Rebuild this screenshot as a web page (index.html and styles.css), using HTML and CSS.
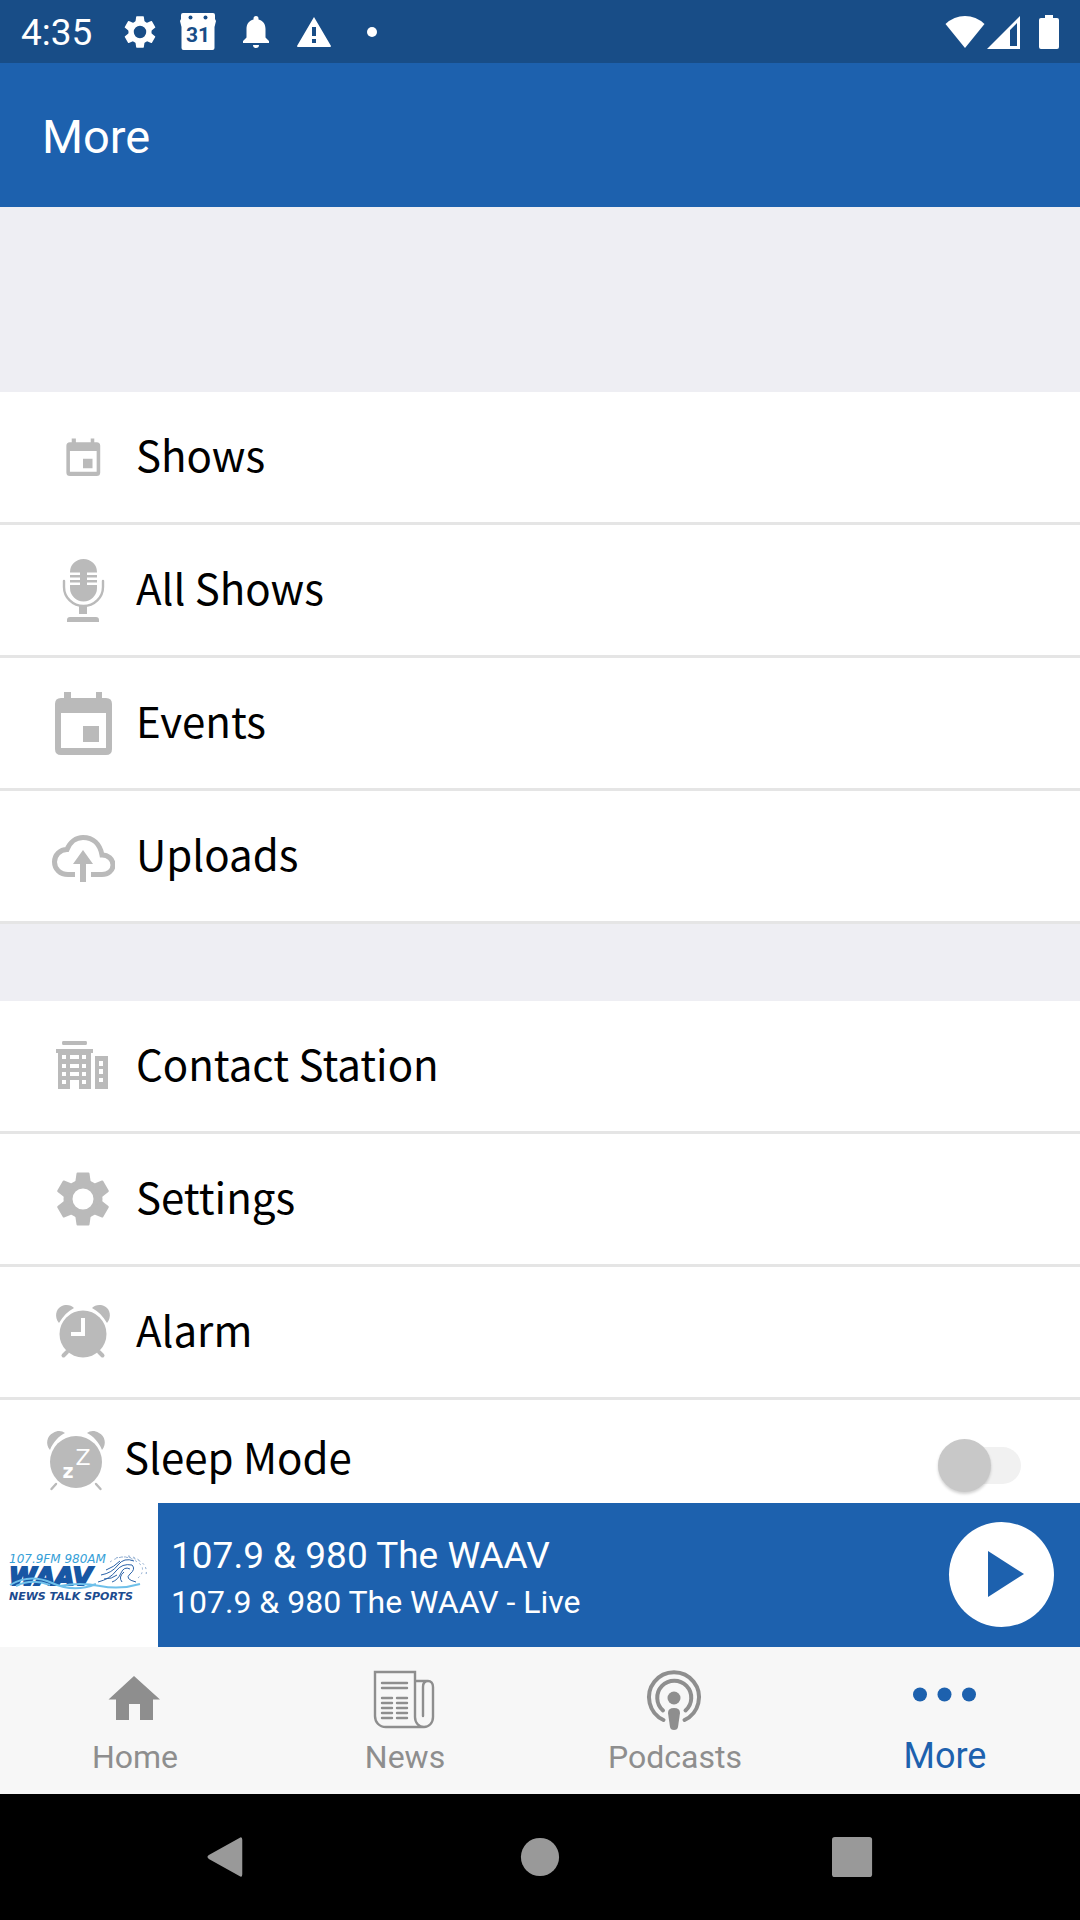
FILE: index.html
```html
<!DOCTYPE html>
<html lang="en">
<head>
<meta charset="utf-8">
<meta name="viewport" content="width=device-width, initial-scale=1">
<title>More</title>
<link rel="stylesheet" href="styles.css">
</head>
<body>
<svg class="sprite" aria-hidden="true">
  <symbol id="calendar" viewBox="0 0 64 64">
    <path fill-rule="evenodd" d="M10 7H13V1H20V7H45V1H51V7H55Q61 7 61 13V58Q61 64 55 64H10Q4 64 4 58V13Q4 7 10 7ZM10 22V57H55V22ZM32 35H48V51H32Z"/>
  </symbol>
  <symbol id="gear" viewBox="0 0 54 54">
    <circle cx="27" cy="27" r="15" fill="none" stroke="currentColor" stroke-width="9"/>
    <g id="teeth">
      <path id="tooth" d="M20.5 1.5Q20.6.5 21.5.5H32.5Q33.4.5 33.5 1.5L35 12H19Z"/>
      <use href="#tooth" transform="rotate(60 27 27)"/>
      <use href="#tooth" transform="rotate(120 27 27)"/>
      <use href="#tooth" transform="rotate(180 27 27)"/>
      <use href="#tooth" transform="rotate(240 27 27)"/>
      <use href="#tooth" transform="rotate(300 27 27)"/>
    </g>
  </symbol>
</svg>

<div class="status-bar">
  <time class="clock">4:35</time>
  <svg class="st-gear" aria-hidden="true"><use href="#gear"/></svg>
  <svg class="st-cal" viewBox="0 0 36 37" aria-hidden="true">
    <path d="M3 0H33Q35 0 35 2V6L36 8L34.500 14V35Q34.500 37 32.500 37H3.500Q1.500 37 1.500 35V14L0 8L1 6V2Q1 0 3 0Z"/>
    <circle class="hole" cx="10.500" cy="4.500" r="2"/><circle class="hole" cx="25.500" cy="4.500" r="2"/>
    <text class="cal-day" x="18" y="29">31</text>
  </svg>
  <svg class="st-bell" viewBox="0 0 32 32" aria-hidden="true">
    <path d="M3 27V25L6.500 21.500V13C6.500 8 9 4.500 13.500 3.500V2.500Q13.500 0 16 0Q18.500 0 18.500 2.500V3.500C23 4.500 25.500 8 25.500 13V21.500L29 25V27ZM13 29H19Q19 32 16 32Q13 32 13 29Z"/>
  </svg>
  <svg class="st-warn" viewBox="0 0 36 32" aria-hidden="true">
    <path fill-rule="evenodd" d="M18 1L35 30Q35 31 34 31H2Q1 31 1 30ZM16 11V20H20V11ZM16 23V27H20V23Z"/>
  </svg>
  <svg class="st-dot" viewBox="0 0 32 32" aria-hidden="true"><circle cx="16" cy="16" r="5"/></svg>
  <div class="signals">
    <svg class="st-wifi" viewBox="0 0 40 34" aria-hidden="true"><path d="M0.500 9Q9 1 20 1Q31 1 39.500 9L20 33Z"/></svg>
    <svg class="st-cell" viewBox="0 0 34 34" aria-hidden="true"><path fill-rule="evenodd" d="M0 34L33 1V34ZM23 15V31H30V8Z"/></svg>
    <svg class="st-batt" viewBox="0 0 20 34" aria-hidden="true"><path d="M6 0H14V3H18Q20 3 20 5V32Q20 34 18 34H2Q0 34 0 32V5Q0 3 2 3H6Z"/></svg>
  </div>
</div>

<header class="app-bar"><h1 class="app-title">More</h1></header>

<main class="content">
  <nav class="group" aria-label="Programming">
    <a class="row" href="#shows">
      <span class="row-icon"><svg class="icon-small"><use href="#calendar"/></svg></span>
      <span class="row-text">Shows</span></a>
    <a class="row" href="#all-shows">
      <span class="row-icon"><svg class="icon" viewBox="0 0 64 64">
        <path d="M19 14.500V14A13.500 13 0 0 1 46 14V14.500H36V17H46V19.500H36V22H46V24.500H36V27H46V30A13.500 13.500 0 0 1 19 30V27H29V24.500H19V22H29V19.500H19V17H29V14.500ZM28 47H36V56H28ZM16 64V62Q16 59 19 59H45Q48 59 48 62V64Z"/>
        <path class="line-2" d="M13 23V29A19.500 19 0 0 0 52 29V23"/>
      </svg></span>
      <span class="row-text">All Shows</span></a>
    <a class="row" href="#events">
      <span class="row-icon"><svg class="icon"><use href="#calendar"/></svg></span>
      <span class="row-text">Events</span></a>
    <a class="row" href="#uploads">
      <span class="row-icon"><svg class="icon" viewBox="0 0 64 64">
        <path class="line-5" d="M24 50.500H17C9 50.500 3.500 45 3.500 38C3.500 31 9 25.500 16 25.500C19 18 25 13.500 32 13.500C42 13.500 49 20 51 31C57 31 62 35 62 41C62 46.500 57 50.500 51 50.500H40"/>
        <path d="M32 26L42 40H35V58H29V40H22Z"/>
      </svg></span>
      <span class="row-text">Uploads</span></a>
  </nav>

  <div class="group">
    <a class="row" href="#contact">
      <span class="row-icon"><svg class="icon" viewBox="0 0 64 64">
        <path fill-rule="evenodd" d="M12 7H35Q36 7 36 9Q36 11 35 11H12Q11 11 11 9Q11 7 12 7ZM5 15H42V19H40V55H28V46H19V55H7V19H5ZM11 21V25H15V21ZM19 21V25H28V21ZM31 21V25H35V21ZM11 30V34H15V30ZM19 30V34H28V30ZM31 30V34H35V30ZM11 38V42H15V38ZM19 38V42H28V38ZM31 38V42H35V38ZM11 46V50H15V46ZM31 46V50H35V46ZM44 22H57V55H44ZM48 27V32H52V27ZM48 35V40H52V35ZM48 44V48H52V44Z"/>
      </svg></span>
      <span class="row-text">Contact Station</span></a>
    <a class="row" href="#settings">
      <span class="row-icon"><svg class="icon-gear"><use href="#gear"/></svg></span>
      <span class="row-text">Settings</span></a>
    <a class="row" href="#alarm">
      <span class="row-icon"><svg class="icon" viewBox="0 0 64 64">
        <circle cx="32" cy="34" r="23.500"/>
        <path d="M8 23C3 17 5 9 10 6.500C15 4 20 5 23 8C17 11 12 16 8 23ZM56 23C61 17 59 9 54 6.500C49 4 44 5 41 8C47 11 52 16 56 23Z"/>
        <path class="line-4" d="M16 52L12.500 55.500M48 52L51.500 55.500"/>
        <path class="hand" d="M32 18V34H20"/>
      </svg></span>
      <span class="row-text">Alarm</span></a>
    <div class="row row-switch">
      <span class="row-icon"><svg class="icon" viewBox="0 0 64 64">
        <circle cx="32" cy="34" r="26"/>
        <path d="M6 22C1 16 3 8 9 5C14 2 18 3 21 5C15 8 9 14 6 22ZM58 22C63 16 61 8 55 5C50 2 46 3 43 5C49 8 55 14 58 22Z"/>
        <path class="line-2" d="M12 56L7.500 61M52 56L56.500 61"/>
        <text class="z-large" x="39" y="37">Z</text>
        <text class="z-small" x="24" y="50">z</text>
      </svg></span>
      <label class="row-text" for="sleep">Sleep Mode</label>
      <input class="switch" id="sleep" type="checkbox" role="switch">
    </div>
  </div>
</main>

<section class="player" aria-label="Now playing">
  <svg class="art" viewBox="0 0 158 144" role="img" aria-label="WAAV station logo">
    <text class="art-freq" x="9" y="60">107.9FM 980AM</text>
    <text class="art-name" x="9" y="82">WAAV</text>
    <path class="wave-light" d="M10 82Q30 70 52 80T96 81M16 83Q32 75 50 82M60 83Q80 79 100 83T140 81"/>
    <path class="wave-dark" d="M98 79Q110 76 116 68T132 62Q136 66 130 71Q124 76 136 79M101 72Q112 70 118 62T134 58M106 67Q114 64 120 58M112 79Q118 77 121 70T130 66M104 76Q112 76 117 72M122 79Q118 74 124 69"/>
    <path class="wave-spray" d="M110 59Q122 50 138 57Q148 62 146 72M116 55Q130 51 142 63Q144 70 138 75M128 53Q136 54 141 59"/>
    <text class="art-tag" x="9" y="97">NEWS TALK SPORTS</text>
  </svg>
  <div class="track">
    <div class="track-title">107.9 &amp; 980 The WAAV</div>
    <div class="track-sub">107.9 &amp; 980 The WAAV - Live</div>
  </div>
  <button class="play" type="button" aria-label="Play">
    <svg class="play-icon" viewBox="0 0 36 46" aria-hidden="true"><path d="M0 0L36 23L0 46Z"/></svg>
  </button>
</section>

<nav class="tabs" aria-label="Main">
  <a class="tab" href="#home">
    <svg class="icon" viewBox="0 0 64 64"><path d="M31 9L57 32.500H50V53H37V37H26V53H13V32.500H5.500Z"/></svg>
    <span class="tab-label">Home</span></a>
  <a class="tab" href="#news">
    <svg class="icon" viewBox="0 0 64 64">
      <path class="line-2" d="M51 60H13C6 60 2 55 2 49V5H42V50C42 56 46 60 51 60C56 60 60 56 60 50V20C60 16 58 14 55 14C52 14 50 16 50 20V49M42 14H55"/>
      <path class="line-2" d="M9 16H34M9 21H34M9 31H19M24 31H34M9 36H19M24 36H34M9 41H19M24 41H34M9 46H19M24 46H34M9 51H19M24 51H34"/>
    </svg>
    <span class="tab-label">News</span></a>
  <a class="tab" href="#podcasts">
    <svg class="icon" viewBox="0 0 64 64">
      <path class="line-4" d="M20.500 53A25 25 0 1 1 41.500 53M20 43.500A17 17 0 1 1 42.500 43.500"/>
      <circle cx="31" cy="31" r="6.500"/>
      <path d="M25 46Q25 41 31 41Q37 41 37 46L35 60Q34.500 63 31 63Q27.500 63 27 60Z"/>
    </svg>
    <span class="tab-label">Podcasts</span></a>
  <a class="tab tab-active" href="#more" aria-current="page">
    <svg class="icon" viewBox="0 0 64 64"><circle cx="7" cy="27.500" r="7"/><circle cx="31.500" cy="27.500" r="7"/><circle cx="56" cy="27.500" r="7"/></svg>
    <span class="tab-label">More</span></a>
</nav>

<div class="system-nav">
  <button class="sys" type="button" aria-label="Back"><svg class="sys-icon" viewBox="0 0 44 44"><path d="M3 20L35 2Q38 0 38 4V40Q38 44 35 42L3 24Q0 22 3 20Z"/></svg></button>
  <button class="sys" type="button" aria-label="Home screen"><svg class="sys-icon" viewBox="0 0 44 44"><circle cx="22" cy="22" r="20"/></svg></button>
  <button class="sys" type="button" aria-label="Recent apps"><svg class="sys-icon" viewBox="0 0 44 44"><rect x="0" y="1" width="42" height="42" rx="3"/></svg></button>
</div>
</body>
</html>
```

FILE: styles.css
```css
:root {
  --brand: #1d61ae;
  --icon: #bababa;
  --muted: #8e8e8e;
}

* { box-sizing: border-box; }

body {
  margin: 0;
  height: 100vh;
  display: flex;
  flex-direction: column;
  background: #eeeef3;
  font-family: Roboto, "Liberation Sans", sans-serif;
}

svg { display: block; fill: currentColor; flex: none; }
a { color: inherit; text-decoration: none; }
button { border: 0; padding: 0; background: none; }
.sprite { position: absolute; width: 0; height: 0; }

.line-2, .line-4, .line-5, .hand { fill: none; stroke: currentColor; stroke-linecap: round; }
.line-2 { stroke-width: 2.4; }
.line-4 { stroke-width: 4; }
.line-5 { stroke-width: 5; stroke-linecap: butt; }
.hand { stroke: #fff; stroke-width: 4; stroke-linecap: butt; }

/* Status bar */
.status-bar {
  flex: none;
  height: 63px;
  padding: 0 21px;
  display: flex;
  align-items: center;
  gap: 24px;
  background: #184d87;
  color: #fff;
}
.clock { font-size: 37px; padding-top: 2px; margin-right: 8px; }
.st-gear { width: 32px; height: 34px; }
.st-cal { width: 36px; height: 37px; }
.st-bell { width: 32px; height: 32px; }
.st-warn { width: 36px; height: 32px; }
.st-dot { width: 32px; height: 32px; }
.hole, .cal-day { fill: #184d87; }
.cal-day { font-size: 21px; font-weight: 700; text-anchor: middle; }
.signals { display: flex; align-items: center; margin-left: auto; }
.st-wifi { width: 40px; height: 34px; margin-right: 2px; }
.st-cell { width: 34px; height: 34px; margin-right: 18px; }
.st-batt { width: 20px; height: 34px; }

/* App bar */
.app-bar {
  flex: none;
  height: 144px;
  padding: 2px 42px 0;
  display: flex;
  align-items: center;
  background: var(--brand);
  color: #fff;
}
.app-title { margin: 0; font-size: 47px; font-weight: 400; }

/* List */
.content {
  flex: 1;
  min-height: 0;
  overflow-y: auto;
  scrollbar-width: none;
  padding-top: 185px;
  display: flex;
  flex-direction: column;
  gap: 77px;
}
.group { flex: none; background: #fff; }
.row {
  height: 133px;
  padding: 0 51px;
  display: flex;
  align-items: center;
  gap: 21px;
  border-bottom: 3px solid #e5e5e5;
  font-family: "Noto Sans CJK SC", "Noto Sans", sans-serif;
  font-size: 42px;
  line-height: 60px;
  color: #000;
}
.row-text { padding-bottom: 7px; }
.row-icon {
  flex: none;
  width: 64px;
  height: 64px;
  display: flex;
  align-items: center;
  justify-content: center;
  color: var(--icon);
}
.icon { width: 64px; height: 64px; }
.icon-small { width: 38px; height: 38px; }
.icon-gear { width: 54px; height: 54px; }
.z-large, .z-small { fill: #fff; font-family: "DejaVu Sans", sans-serif; text-anchor: middle; }
.z-large { font-size: 22px; }
.z-small { font-size: 19px; font-weight: 700; }

.row-switch { height: 119px; padding: 0 59px 0 44px; gap: 16px; border-bottom: 0; }
.switch {
  appearance: none;
  flex: none;
  width: 83px;
  height: 37px;
  margin: 12px 0 0 auto;
  display: flex;
  align-items: center;
  background: #f1f1f1;
  border-radius: 19px;
}
.switch::before {
  content: "";
  flex: none;
  width: 53px;
  height: 53px;
  border-radius: 50%;
  background: #c8c8c8;
  box-shadow: 0 2px 3px #0000002e;
}
.switch:checked { justify-content: flex-end; }
.switch:checked::before { background: var(--brand); }

/* Player */
.player {
  flex: none;
  height: 144px;
  padding-right: 26px;
  display: flex;
  align-items: center;
  background: var(--brand);
  color: #fff;
}
.art { width: 158px; height: 144px; background: #fff; font-family: "DejaVu Sans", sans-serif; }
.art-freq { font-size: 12px; font-style: oblique; fill: #35a0d8; }
.art-name { font-size: 25px; font-weight: 700; font-style: oblique; fill: #1857a4; stroke: #1857a4; stroke-width: 2; }
.art-tag { font-size: 11px; font-weight: 700; font-style: oblique; fill: #1c4b8f; }
.wave-light, .wave-dark, .wave-spray { fill: none; }
.wave-light { stroke: #6fc0ea; stroke-width: 2; }
.wave-dark { stroke: #2a62a8; stroke-width: 1; }
.wave-spray { stroke: #8aa9cf; stroke-width: 1; stroke-dasharray: 2 3; }
.track { flex: 1; min-width: 0; padding: 8px 0 0 13px; line-height: 46px; white-space: nowrap; }
.track-title { font-size: 37px; }
.track-sub { font-size: 32px; }
.play {
  flex: none;
  width: 105px;
  height: 105px;
  margin-bottom: 2px;
  border-radius: 50%;
  background: #fff;
  color: var(--brand);
  display: flex;
  align-items: center;
  justify-content: center;
}
.play-icon { width: 36px; height: 46px; margin-left: 8px; }

/* Tabs */
.tabs {
  flex: none;
  height: 147px;
  padding-top: 20px;
  display: grid;
  grid-template-columns: repeat(4, 1fr);
  background: #f7f7f7;
}
.tab { display: flex; flex-direction: column; align-items: center; gap: 2px; color: var(--muted); }
.tab-label { font-size: 32px; line-height: 48px; }
.tab-active { color: var(--brand); }
.tab-active .tab-label { font-size: 36px; line-height: 46px; }

/* System navigation */
.system-nav {
  flex: none;
  height: 126px;
  padding: 0 70px;
  display: grid;
  grid-template-columns: repeat(3, 1fr);
  background: #000;
}
.sys { display: flex; align-items: center; justify-content: center; color: #999; }
.sys-icon { width: 42px; height: 42px; }
```
